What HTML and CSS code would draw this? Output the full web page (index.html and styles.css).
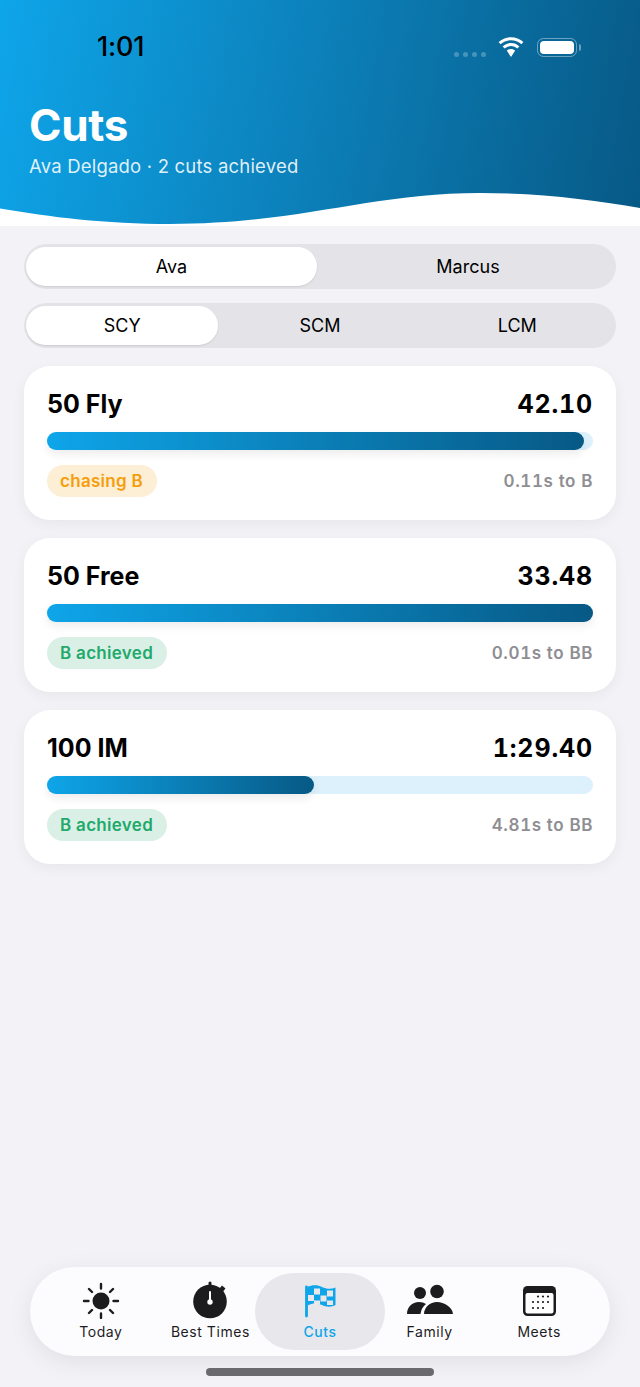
FILE: index.html
```html
<!DOCTYPE html>
<html lang="en">
<head>
<meta charset="utf-8">
<title>Cuts</title>
<link rel="stylesheet" href="styles.css">
</head>
<body>
<div class="app">
  <header class="hero">
    <div class="status">
      <span class="clock">1:01</span>
      <div class="status-icons">
        <div class="dots"><i></i><i></i><i></i><i></i></div>
        <svg class="wifi" width="28" height="20" viewBox="0 0 28 20"><path d="M14 3.200c4 0 7.600 1.500 10.400 4.100l2-2.200C23 1.900 18.700.2 14 .2S5 1.900 1.600 5.100l2 2.200C6.400 4.700 10 3.200 14 3.200zM14 9.100c2.400 0 4.600.9 6.300 2.500l2.100-2.200C20.100 7.300 17.200 6.100 14 6.100s-6.100 1.200-8.400 3.300l2.100 2.200c1.700-1.600 3.900-2.500 6.300-2.500zM14 12c-1.600 0-3 .6-4.200 1.600l4.200 6.400 4.200-6.400C17 12.600 15.600 12 14 12z" fill="#fff"/></svg>
        <div class="battery"><div class="battery-fill"></div></div>
        <div class="battery-cap"></div>
      </div>
    </div>
    <h1 class="title">Cuts</h1>
    <p class="subtitle">Ava Delgado · 2 cuts achieved</p>
    <svg class="wave" width="640" height="36" viewBox="0 0 640 36" preserveAspectRatio="none"><path d="M0 18.500C50 27 105 34 170 34C300 34 370 3 480 3C540 3 595 10 640 18V36H0Z" fill="#fff"/></svg>
  </header>

  <main class="content">
    <div class="segment seg-two">
      <div class="seg-item active">Ava</div>
      <div class="seg-item">Marcus</div>
    </div>
    <div class="segment seg-three">
      <div class="seg-item active">SCY</div>
      <div class="seg-item">SCM</div>
      <div class="seg-item">LCM</div>
    </div>

    <section class="card">
      <div class="row"><span class="event">50 Fly</span><span class="time">42.10</span></div>
      <div class="track"><div class="fill" style="width:98.4%"></div></div>
      <div class="row"><span class="pill chasing">chasing B</span><span class="gap">0.11s to B</span></div>
    </section>
    <section class="card">
      <div class="row"><span class="event">50 Free</span><span class="time">33.48</span></div>
      <div class="track"><div class="fill" style="width:100%"></div></div>
      <div class="row"><span class="pill achieved">B achieved</span><span class="gap">0.01s to BB</span></div>
    </section>
    <section class="card">
      <div class="row"><span class="event">100 IM</span><span class="time">1:29.40</span></div>
      <div class="track"><div class="fill" style="width:48.9%"></div></div>
      <div class="row"><span class="pill achieved">B achieved</span><span class="gap">4.81s to BB</span></div>
    </section>
  </main>

  <nav class="tabbar">
    <div class="tab">
      <svg width="38" height="38" viewBox="0 0 38 38"><circle cx="19" cy="20" r="8.500" fill="#1c1c1e"/><g stroke="#1c1c1e" stroke-width="2.400" stroke-linecap="round"><path d="M19 3v4.500M19 32.500V37M2 20h4.500M31.500 20H36M7 8l3 3M28 29l3 3M31 8l-3 3M10 29l-3 3"/></g></svg>
      <span>Today</span>
    </div>
    <div class="tab">
      <svg width="38" height="38" viewBox="0 0 38 38"><circle cx="19" cy="20.500" r="16.800" fill="#1c1c1e"/><rect x="17.500" y="0.500" width="3" height="5" rx="1.500" fill="#1c1c1e"/><path d="M31 4.500l3.500 3-2.500 3-3.500-3z" fill="#1c1c1e"/><rect x="18" y="10" width="2" height="11" rx="1" fill="#fff"/><circle cx="19" cy="21" r="2.700" fill="#fff"/></svg>
      <span>Best Times</span>
    </div>
    <div class="tab current">
      <svg width="38" height="38" viewBox="0 0 38 38"><path d="M5.500 6V35" stroke="#0ea5e9" stroke-width="2.800" stroke-linecap="round"/><path d="M6 6C12 3.500 17 4 21 6c4 2 9 2.500 13.500.500V24c-4.500 2.500-9.500 2-13.500 0s-9-2.500-15 .500z" fill="#0ea5e9"/><g fill="#e8e8ec"><rect x="13" y="7.500" width="6" height="6"/><rect x="26" y="9.500" width="6" height="6"/><rect x="7" y="14" width="6" height="6"/><rect x="19.500" y="14.500" width="6" height="6"/><rect x="13" y="19.500" width="6" height="4"/><rect x="26" y="19.500" width="6" height="4.500"/></g></svg>
      <span>Cuts</span>
    </div>
    <div class="tab">
      <svg width="46" height="38" viewBox="0 0 46 38"><circle cx="13" cy="12" r="6" fill="#1c1c1e"/><circle cx="30" cy="10.500" r="6.800" fill="#1c1c1e"/><path d="M0 33c0-7 5-12 12-12 3 0 5 .7 7 2-3 2.500-5 5.500-5.500 10z" fill="#1c1c1e"/><path d="M17 33c0-6.500 6-12 13-12s15.500 5 16 12z" fill="#1c1c1e"/></svg>
      <span>Family</span>
    </div>
    <div class="tab">
      <svg width="38" height="38" viewBox="0 0 38 38"><rect x="3" y="5" width="33" height="30" rx="4.500" fill="#1c1c1e"/><rect x="5.500" y="12" width="28" height="20.500" rx="2" fill="#fff"/><g fill="#1c1c1e"><circle cx="18" cy="15.500" r="1.100"/><circle cx="23" cy="15.500" r="1.100"/><circle cx="28" cy="15.500" r="1.100"/><circle cx="13" cy="21" r="1.100"/><circle cx="18" cy="21" r="1.100"/><circle cx="23" cy="21" r="1.100"/><circle cx="28" cy="21" r="1.100"/><circle cx="13" cy="27" r="1.100"/><circle cx="18" cy="27" r="1.100"/><circle cx="23" cy="27" r="1.100"/></g></svg>
      <span>Meets</span>
    </div>
  </nav>
  <div class="home-zone"><div class="home"></div></div>
</div>
</body>
</html>
```
FILE: styles.css
```css
* { box-sizing: border-box; }
html, body { margin: 0; padding: 0; }
body { background: #f2f2f7; font-family: Inter, "Liberation Sans", sans-serif; color: #000; }
.app { width: 640px; height: 1387px; display: flex; flex-direction: column; overflow: hidden; background: #f2f2f7; }

.hero { position: relative; height: 226px; flex: none; background: linear-gradient(100deg, #0ea5e9 0%, #0c7fb8 50%, #075985 100%); padding: 0 30px; color: #fff; }
.status { height: 96px; display: flex; justify-content: space-between; padding: 32px 59px 0 97px; margin: 0 -30px; }
.clock { font-size: 27px; line-height: 30px; font-weight: 500; color: #000; letter-spacing: -0.2px; }
.status-icons { display: flex; align-items: flex-start; padding-top: 4px; }
.dots { display: flex; gap: 4px; margin-top: 16px; margin-right: 11px; }
.dots i { width: 5px; height: 5px; border-radius: 50%; background: rgba(255,255,255,.25); }
.wifi { display: block; margin-top: 1px; margin-right: 12px; }
.battery { width: 40px; height: 19px; margin-top: 2px; border: 1.500px solid rgba(255,255,255,.4); border-radius: 6.500px; padding: 2px; }
.battery-fill { width: 100%; height: 100%; background: #fff; border-radius: 4px; }
.battery-cap { width: 2.500px; height: 7px; margin: 8px 0 0 1.500px; border-radius: 0 2px 2px 0; background: rgba(255,255,255,.4); }
.title { margin: 0 0 0 -1px; font-size: 44px; line-height: 48px; font-weight: 700; letter-spacing: -0.3px; color: #fff; position: relative; top: 5px; }
.subtitle { margin: 0 0 0 -1px; font-size: 18.500px; line-height: 22px; font-weight: 400; color: rgba(255,255,255,.88); position: relative; top: 11px; letter-spacing: 0.2px; }
.wave { position: absolute; left: 0; bottom: 0; display: block; }

.content { flex: 1; padding: 18px 24px 0; display: flex; flex-direction: column; }
.segment { height: 45px; border-radius: 23px; background: #e3e3e8; padding: 3px 0; display: grid; margin-bottom: 14px; }
.seg-two { grid-template-columns: 1fr 1fr; }
.seg-three { grid-template-columns: 1fr 1fr 1fr; margin-bottom: 18px; }
.seg-item { display: flex; align-items: center; justify-content: center; font-size: 18px; color: #000; border-radius: 20px; }
.seg-item.active { margin: 0 3px 0 2px; background: #fff; box-shadow: 0 1px 2px rgba(0,0,0,.1); }

.card { height: 154px; margin-bottom: 18px; background: #fff; border-radius: 26px; padding: 22px 23px 0; box-shadow: 0 4px 14px rgba(0,0,0,.05); }
.row { display: flex; justify-content: space-between; align-items: center; }
.event, .time { font-size: 25px; line-height: 32px; font-weight: 700; }
.time { font-variant-numeric: tabular-nums; letter-spacing: 0.85px; }
.track { height: 18px; margin: 12px 0 15px; border-radius: 9px; background: #dcf1fb; }
.fill { height: 100%; border-radius: 9px; background: linear-gradient(90deg, #0ea5e9, #075985); box-shadow: 0 4px 10px rgba(0,0,0,.08); }
.pill { height: 32px; line-height: 32px; padding: 0 14px 0 13px; border-radius: 16px; font-size: 17px; font-weight: 600; letter-spacing: 0.3px; }
.chasing { background: #fdeed6; color: #f59e0b; }
.achieved { background: #daf0e6; color: #22a96c; }
.gap { font-size: 17px; font-weight: 600; color: #8e8e93; font-variant-numeric: tabular-nums; letter-spacing: 0.6px; }

.tabbar { flex: none; height: 89px; margin: 0 30px; padding: 6px 16px; background: #fcfcfe; border-radius: 45px; display: grid; grid-template-columns: repeat(5, 1fr); box-shadow: 0 6px 24px rgba(0,0,0,.08); }
.tab { display: flex; flex-direction: column; align-items: center; padding-top: 8px; border-radius: 39px; font-size: 14px; line-height: 18px; font-weight: 400; color: #1c1c1e; letter-spacing: 0.55px; white-space: nowrap; }
.tab svg { display: block; height: 38px; }
.tab span { display: block; margin-top: 4px; }
.tab.current { margin: 0 -10px; background: #e8e8ec; color: #0ea5e9; font-weight: 500; }
.home-zone { flex: none; height: 31px; padding-top: 12px; display: flex; justify-content: center; }
.home { width: 228px; height: 8px; border-radius: 4px; background: #6a6a6e; }
```
